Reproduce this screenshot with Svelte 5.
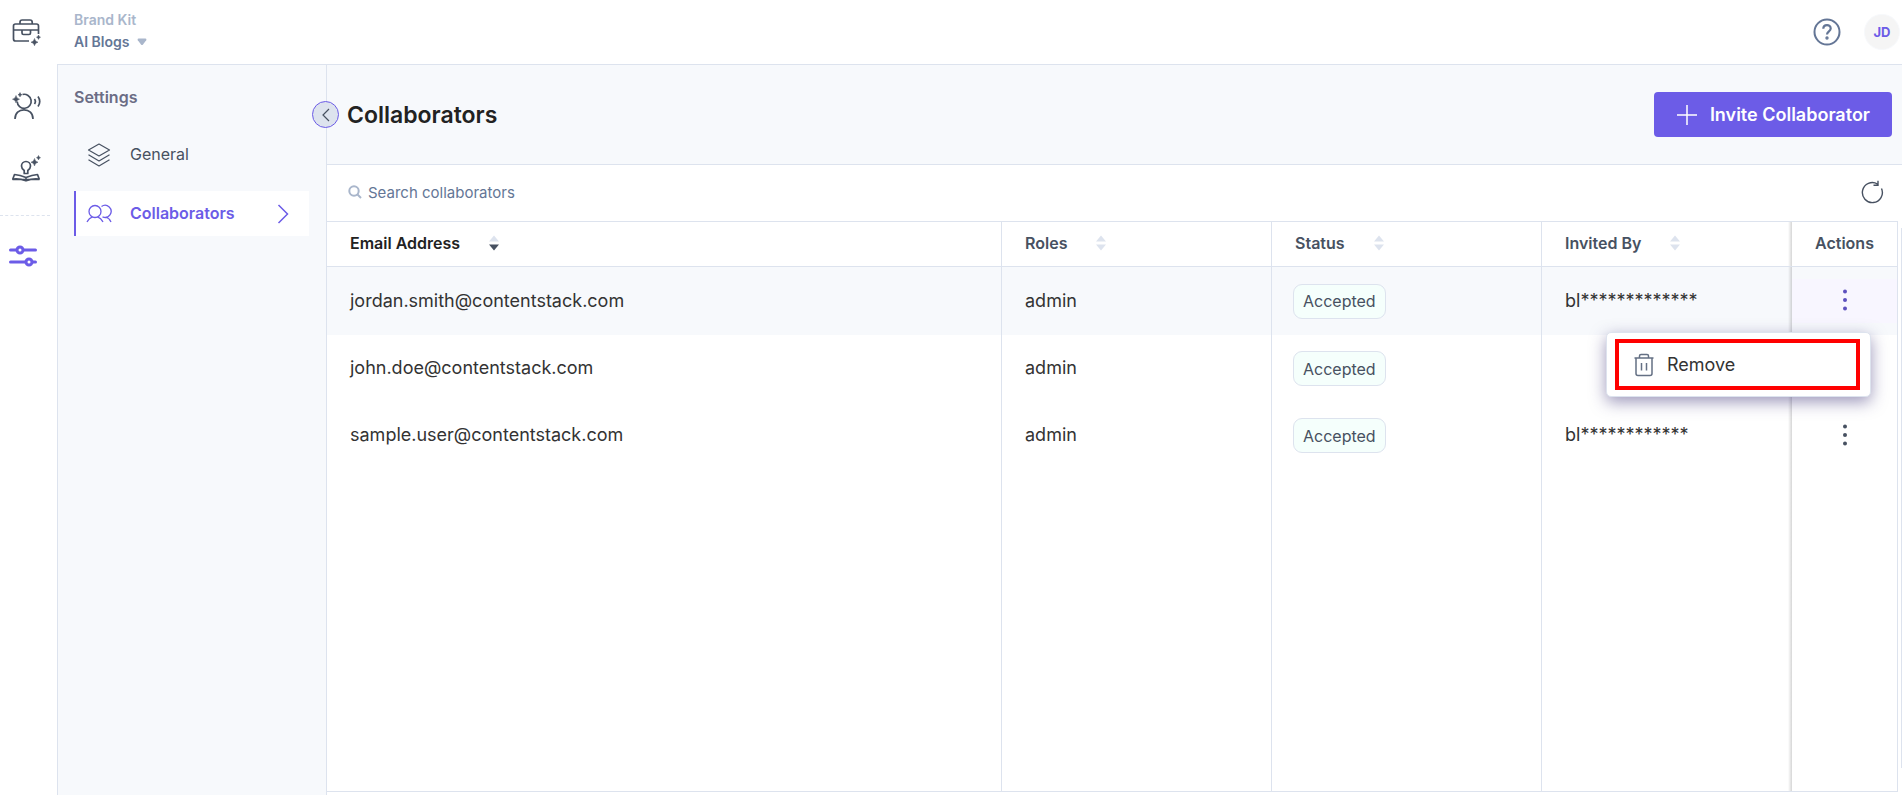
<script>
  const columns = [
    { key: 'email', label: 'Email Address', sort: 'desc' },
    { key: 'roles', label: 'Roles', sort: 'none' },
    { key: 'status', label: 'Status', sort: 'none' },
    { key: 'invited', label: 'Invited By', sort: 'none' },
  ];

  const people = [
    { email: 'jordan.smith@contentstack.com', role: 'admin', status: 'Accepted', invitedBy: 'bl*************' },
    { email: 'john.doe@contentstack.com', role: 'admin', status: 'Accepted', invitedBy: '' },
    { email: 'sample.user@contentstack.com', role: 'admin', status: 'Accepted', invitedBy: 'bl************' },
  ];

  let openRow = $state(0);
  let query = $state('');
</script>

<div class="app">
  <nav class="rail" aria-label="Main">
    <a class="rail-link logo" href="#kit" aria-label="Brand Kit">
      <svg width="30" height="30" viewBox="0 0 30 30" class="ink">
        <path d="M8 7V5.2Q8 3 10.2 3H18Q20.200 3 20.200 5.200V7" />
        <path d="M26.500 17V9Q26.500 7 24.500 7H3.500Q1.500 7 1.500 9V22Q1.500 24 3.500 24H17" />
        <path d="M1.500 13H26.500M10 13V16Q10 17.500 11.500 17.500H17Q18.500 17.500 18.500 16V13" />
        <path class="solid" d="M22.500 21.500Q23 24.700 26 25.200Q23 25.700 22.500 28.700Q22 25.700 19 25.200Q22 24.700 22.500 21.500ZM26.500 18Q26.800 19.900 28.500 20.200Q26.800 20.500 26.500 22.400Q26.200 20.500 24.500 20.200Q26.200 19.900 26.500 18Z" />
      </svg>
    </a>
    <a class="rail-link" href="#voice" aria-label="Voice profiles">
      <svg width="30" height="30" viewBox="0 0 30 30" class="ink">
        <path d="M10.500 3.500A7 7 0 1 1 5.200 10.500" />
        <path d="M3 28C3 22 7 18.800 12 18.800S21 22 21 28" />
        <path d="M22.500 8Q24.300 10.500 22.500 13M26 5.500Q29.500 10.500 26 15.500" />
        <path class="solid" d="M4 4.500Q4.500 7.700 7.500 8.200Q4.500 8.700 4 11.900Q3.500 8.700 .5 8.200Q3.500 7.700 4 4.500ZM8 1.500Q8.300 3.400 10 3.700Q8.300 4 8 5.900Q7.700 4 6 3.700Q7.700 3.400 8 1.500Z" />
      </svg>
    </a>
    <a class="rail-link" href="#knowledge" aria-label="Knowledge vault">
      <svg width="30" height="30" viewBox="0 0 30 30" class="ink">
        <path d="M12.200 20.500V17.500Q9.500 15.500 9.500 13A4.500 4.500 0 0 1 18.500 13Q18.500 15.500 15.800 17.500V20.500Z" />
        <path d="M14 24.500Q8 22 2.500 21.500L.8 26Q8 25.200 14 27.800Q20 25.200 27.200 26L25.500 21.500Q20 22 14 24.500ZM14 24.500V27.500M.5 26.500H27.500" />
        <path class="solid" d="M22.500 5.500Q23 8.700 26 9.200Q23 9.700 22.500 12.900Q22 9.700 19 9.200Q22 8.700 22.500 5.500ZM26.500 2.500Q26.800 4.400 28.500 4.700Q26.800 5 26.500 6.900Q26.200 5 24.500 4.700Q26.200 4.400 26.500 2.500Z" />
      </svg>
    </a>
    <hr />
    <a class="rail-link settings" href="#settings" aria-label="Settings" aria-current="page">
      <svg width="28" height="24" viewBox="0 0 28 24" fill="none" stroke="#6c5ce7" stroke-width="3" stroke-linecap="round">
        <path d="M1.500 6H7.500M15 6H26.500M1.500 18H16M23.500 18H26.500" />
        <circle cx="11" cy="6" r="3" /><circle cx="20" cy="18" r="3" />
      </svg>
    </a>
  </nav>

  <header class="topbar">
    <div class="crumb">
      <span class="product">Brand Kit</span>
      <button class="kit">AI Blogs
        <svg width="10" height="8" viewBox="0 0 10 8"><path d="M1.500 .5H8.500Q10 .7 9.200 2.200L6 6.500Q5 7.500 4 6.500L.8 2.200Q0 .7 1.500 .5Z" fill="#a9b6cb" /></svg>
      </button>
    </div>
    <div class="account">
      <button class="icon-button" aria-label="Help">
        <svg width="28" height="28" viewBox="0 0 28 28" fill="none" stroke="#647696" stroke-width="2">
          <circle cx="14" cy="14" r="12.500" />
          <path d="M10.300 10.800C10.300 5.900 17.700 6 17.700 10.500C17.700 13.300 14 13.500 14 16.600" stroke-width="2.200" />
          <circle cx="14" cy="20" r="1" stroke-width="1.400" />
        </svg>
      </button>
      <button class="avatar">JD</button>
    </div>
  </header>

  <aside class="side">
    <h2>Settings</h2>
    <a class="side-link" href="#general">
      <svg width="24" height="24" viewBox="0 0 24 24" fill="none" stroke="#475161" stroke-width="1.200" stroke-linejoin="round">
        <path d="M12 1L22.500 7L12 13L1.500 7ZM1.500 11.800L12 18L22.500 11.800M1.500 16.800L12 23L22.500 16.800" />
      </svg>
      <span>General</span>
    </a>
    <a class="side-link current" href="#collaborators" aria-current="page">
      <svg width="26" height="20" viewBox="0 0 26 20" fill="none" stroke="#6c5ce7" stroke-width="1.300">
        <circle cx="9" cy="7.500" r="6" />
        <path d="M1 18Q3 14 6.500 13M11.500 13Q15 14 17 18M15.500 2.500A6 6 0 1 1 16.500 12.800M20 13Q23.500 14.500 25 18" />
      </svg>
      <span>Collaborators</span>
      <svg class="go" width="12" height="20" viewBox="0 0 12 20" fill="none" stroke="#6c5ce7" stroke-width="1.500"><path d="M1.500 1L10.500 10L1.500 19" /></svg>
    </a>
    <button class="collapse" aria-label="Collapse settings menu">
      <svg width="10" height="14" viewBox="0 0 10 14" fill="none" stroke="#475161" stroke-width="1.200"><path d="M8 1L2 7L8 13" /></svg>
    </button>
  </aside>

  <main>
    <div class="page-head">
      <h1>Collaborators</h1>
      <button class="primary">
        <svg width="22" height="22" viewBox="0 0 22 22" stroke="#fff" stroke-width="1.500"><path d="M11 1V21M1 11H21" /></svg>
        Invite Collaborator
      </button>
    </div>

    <div class="search">
      <label for="search" aria-label="Search collaborators">
        <svg width="14" height="14" viewBox="0 0 14 14" fill="none" stroke="#a9b6cb" stroke-width="2"><circle cx="6" cy="6" r="4.700" /><path d="M9.500 9.500L13 13" /></svg>
      </label>
      <input id="search" type="text" placeholder="Search collaborators" bind:value={query} />
      <button class="icon-button" aria-label="Refresh">
        <svg width="24" height="24" viewBox="0 0 24 24" fill="none" stroke="#475161" stroke-width="1.400">
          <path d="M21.500 8.500A10 10 0 1 1 17.500 4L18.500 4.600M18 .8V5.200H13.500" />
        </svg>
      </button>
    </div>

    <div class="grid">
      <table>
        <thead>
          <tr>
            {#each columns as column}
              <th class={column.key} scope="col">
                <button class="sort">
                  {column.label}
                  <svg width="10" height="16" viewBox="0 0 10 16">
                    <path d="M5 .5L10 6.500H0Z" fill="#dde3ee" />
                    <path d="M0 9.500H10L5 15.500Z" fill={column.sort === 'desc' ? '#475161' : '#dde3ee'} />
                  </svg>
                </button>
              </th>
            {/each}
            <th class="actions" scope="col">Actions</th>
          </tr>
        </thead>
        <tbody>
          {#each people as person, i}
            <tr class="person" class:active={openRow === i}>
              <td>{person.email}</td>
              <td>{person.role}</td>
              <td class="status-cell"><span class="badge">{person.status}</span></td>
              <td>{person.invitedBy}</td>
              <td class="actions">
                <button class="dots" aria-label="Actions for {person.email}" onclick={() => (openRow = openRow === i ? -1 : i)}>
                  <svg width="6" height="24" viewBox="0 0 6 24"><circle cx="3" cy="3.500" r="2" /><circle cx="3" cy="12" r="2" /><circle cx="3" cy="20.500" r="2" /></svg>
                </button>
                {#if openRow === i}
                  <div class="menu" role="menu">
                    <button role="menuitem">
                      <svg width="20" height="24" viewBox="0 0 20 24" fill="none" stroke="#647084" stroke-width="1.500">
                        <path d="M.5 5H19.500M5.500 5V3Q5.500 1.500 7 1.500H13Q14.500 1.500 14.500 3V5M2 5V20.500Q2 22.500 4 22.500H16Q18 22.500 18 20.500V5M7.500 10V17.500M12.500 10V17.500" />
                      </svg>
                      Remove
                    </button>
                  </div>
                {/if}
              </td>
            </tr>
          {/each}
          <tr class="rest"><td></td><td></td><td></td><td></td><td class="actions"></td></tr>
        </tbody>
      </table>
    </div>
  </main>
</div>

<style>
  :global(body) { margin: 0; background: #fff; }
  * { box-sizing: border-box; }
  button { margin: 0; padding: 0; border: 0; background: none; font: inherit; color: inherit; cursor: pointer; }
  a { text-decoration: none; color: inherit; }
  svg { display: block; flex: none; }

  .app {
    display: grid;
    grid-template-columns: 57px 270px minmax(0, 1fr);
    grid-template-rows: 64px minmax(0, 1fr);
    min-height: 100vh;
    font-family: Inter, sans-serif;
    font-size: 18px;
    color: #333;
  }

  .rail { grid-row: 1 / 3; display: flex; flex-direction: column; padding-top: 17px; }
  .rail-link { display: flex; height: 30px; padding-left: 12px; margin-bottom: 32px; }
  .rail-link.logo { margin-bottom: 44px; }
  .rail .ink { fill: none; stroke: #475161; stroke-width: 1.7; stroke-linejoin: round; }
  .ink .solid { fill: #475161; stroke-width: 0.5; }
  hr { width: 50px; margin: 0; border: 0; border-top: 1px dashed #dde3ee; }
  .rail-link.settings { margin-top: 28px; padding-left: 9px; }

  .topbar { grid-column: 2 / 4; display: flex; justify-content: space-between; align-items: center; padding: 0 2px 0 17px; }
  .crumb { display: flex; flex-direction: column; align-items: flex-start; padding-bottom: 2px; line-height: 22px; font-size: 14px; font-weight: 600; }
  .product { color: #a9b6cb; }
  .kit { display: flex; align-items: center; gap: 8px; color: #647696; }
  .account { display: flex; align-items: center; gap: 23px; }
  .icon-button { display: flex; }
  .avatar { width: 36px; height: 36px; border: 1px solid #f7f9fc; border-radius: 50%; background: #f5f5f5; color: #6c5ce7; font-size: 13px; font-weight: 700; }

  .side { position: relative; padding: 21px 17px 0 16px; border: solid #dde3ee; border-width: 1px 1px 0 1px; background: #f7f9fc; font-size: 16px; }
  h2 { margin: 0 0 24px; line-height: 22px; font-size: 16px; font-weight: 600; color: #6b6d85; }
  .side-link { display: flex; align-items: center; gap: 18px; height: 45px; margin-bottom: 14px; padding: 0 20px 0 10px; border-left: 2px solid transparent; color: #475161; }
  .side-link svg:first-child { width: 26px; }
  .side-link span { padding-bottom: 2px; }
  .side-link.current { background: #fff; border-color: #6c5ce7; color: #6c5ce7; font-weight: 600; }
  .go { margin-left: auto; }
  .collapse { position: absolute; top: 36px; right: -13px; z-index: 2; display: flex; align-items: center; justify-content: center; width: 27px; height: 27px; border: 1px solid #6c5ce7; border-radius: 50%; background: #dde3ee; }

  main { display: flex; flex-direction: column; padding-bottom: 3px; border-top: 1px solid #dde3ee; }
  .page-head { display: flex; align-items: center; justify-content: space-between; height: 100px; padding: 0 10px 0 20px; border-bottom: 1px solid #dde3ee; background: #f7f9fc; }
  h1 { margin: 0; font-size: 23px; font-weight: 600; color: #222; }
  .primary { display: flex; align-items: center; gap: 12px; height: 45px; padding: 0 22px; border-radius: 4px; background: #6c5ce7; color: #fff; font-size: 18px; font-weight: 600; }

  .search { display: flex; align-items: center; gap: 6px; height: 56px; padding: 0 18px 2px 21px; }
  .search input { flex: 1; min-width: 0; padding: 0; border: 0; outline: 0; background: none; font: 400 15px Inter, sans-serif; color: #475161; }
  .search input::placeholder { color: #647696; opacity: 1; }

  .grid { flex: 1; display: flex; gap: 3px; }
  .grid::after { content: ''; width: 1px; margin: 7px 0 24px; background: #dde3ee; }
  table { flex: 1; table-layout: fixed; border-collapse: separate; border-spacing: 0; border: solid #dde3ee; border-width: 1px 1px 1px 0; }
  th, td { padding: 0 23px 2px; text-align: left; border-right: 1px solid #dde3ee; }
  th { height: 45px; border-bottom: 1px solid #dde3ee; font-size: 16px; font-weight: 600; color: #475161; }
  th.email { color: #222; }
  th.roles, th.status { width: 270px; }
  th.invited { width: 250px; }
  th:nth-child(4), td:nth-child(4) { border-right: 0; }
  th.actions { width: 105px; }
  .actions { position: relative; padding: 0 0 2px; text-align: center; border-right: 0; background: #fff; }
  .actions::before { content: ''; position: absolute; top: 0; bottom: 0; left: -4px; width: 4px; background: linear-gradient(to right, rgba(0, 0, 0, 0), rgba(0, 0, 0, 0.16)); }
  .sort { display: flex; align-items: center; gap: 29px; }
  .person td { height: 67px; }
  .person .status-cell { padding: 0 21px; }
  .active td { height: 68px; background: #f7f9fc; }
  .active .actions { z-index: 2; background: linear-gradient(#f7f9fc 12px, #f8f6ff 12px, #f8f6ff 56px, #f7f9fc 56px); }
  .badge { display: inline-flex; align-items: center; height: 35px; padding: 0 9px; border: 1px solid #dde3ee; border-radius: 9px; background: #f5fffc; font-size: 16px; color: #475161; vertical-align: middle; }
  .dots { padding: 8px 16px; fill: #475161; vertical-align: middle; }
  .active .dots { fill: #5d50be; }

  .menu { position: absolute; top: 65px; right: 26px; width: 265px; padding: 6px 10px 6px 8px; border: 1px solid #dde3ee; border-radius: 5px; background: #fff; box-shadow: 0 5px 16px rgba(60, 50, 120, 0.5); }
  .menu button { display: flex; align-items: center; gap: 13px; width: 100%; height: 51px; padding: 0 15px; border: 4px solid #f00; }
</style>
